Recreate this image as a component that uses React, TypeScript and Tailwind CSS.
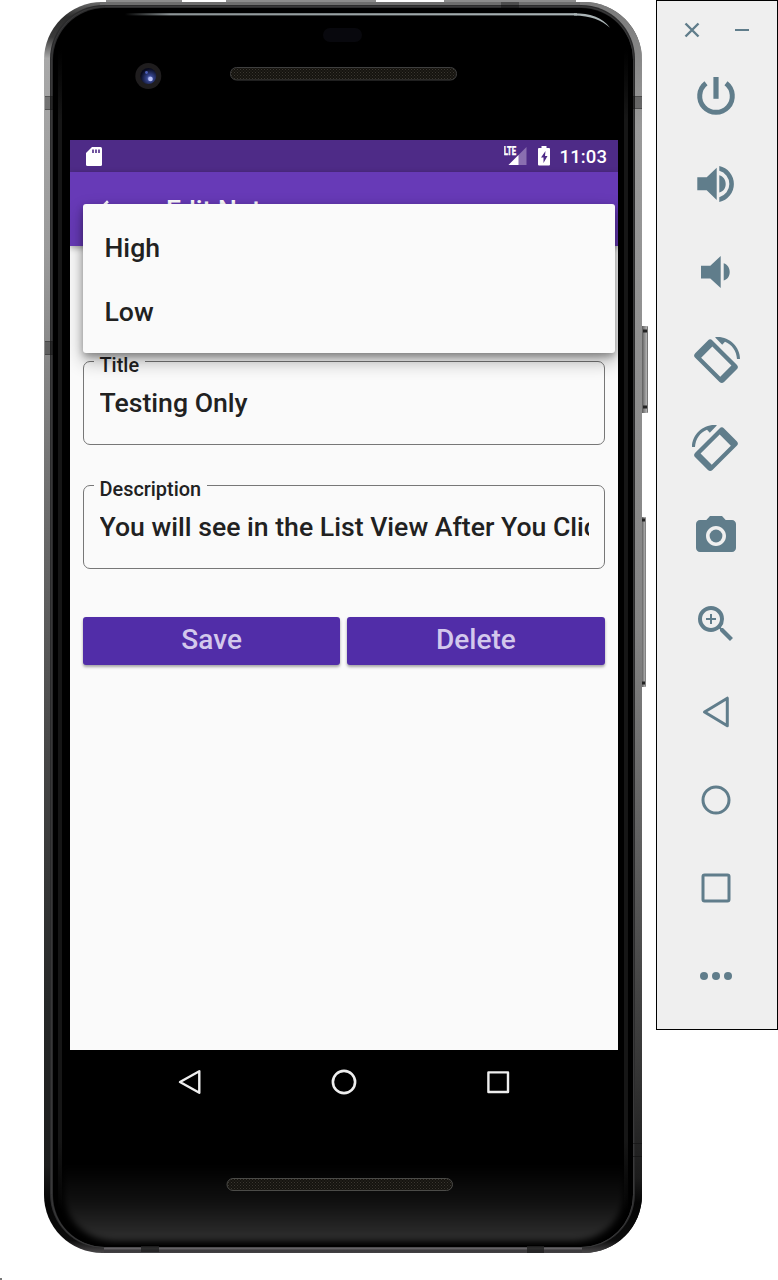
import React from "react";
import { MdArrowBack, MdOutlineZoomIn, MdPhotoCamera } from "react-icons/md";

function PhoneFrame() {
  return (
    <svg className="absolute left-0 top-0" width="656" height="1280" viewBox="0 0 656 1280" aria-hidden="true">
      <defs>
        <linearGradient id="metalLeft" x1="0" y1="0" x2="0" y2="1">
          <stop offset="0" stopColor="#6a6a6a" />
          <stop offset="0.012" stopColor="#2c2c2c" />
          <stop offset="0.028" stopColor="#3a3a3a" />
          <stop offset="0.045" stopColor="#a8a8a8" />
          <stop offset="0.2" stopColor="#9a9a9a" />
          <stop offset="0.4" stopColor="#6e6e6e" />
          <stop offset="0.6" stopColor="#474747" />
          <stop offset="0.8" stopColor="#262828" />
          <stop offset="0.93" stopColor="#1c1d1d" />
          <stop offset="0.96" stopColor="#050505" />
          <stop offset="0.99" stopColor="#0c0c0c" />
          <stop offset="1" stopColor="#4a484a" />
        </linearGradient>
        <linearGradient id="metalRight" x1="0" y1="0" x2="0" y2="1">
          <stop offset="0" stopColor="#7a7a7a" />
          <stop offset="0.1" stopColor="#9a9a9a" />
          <stop offset="0.5" stopColor="#848484" />
          <stop offset="0.7" stopColor="#5a5a5a" />
          <stop offset="0.85" stopColor="#363636" />
          <stop offset="0.94" stopColor="#1c1c1c" />
          <stop offset="0.96" stopColor="#050505" />
          <stop offset="0.99" stopColor="#0c0c0c" />
          <stop offset="1" stopColor="#4a484a" />
        </linearGradient>
        <linearGradient id="rightHalf" x1="0" y1="0" x2="1" y2="0">
          <stop offset="0.3" stopColor="#fff" stopOpacity="0" />
          <stop offset="0.7" stopColor="#fff" />
        </linearGradient>
        <mask id="rightMask">
          <rect x="44" y="0" width="612" height="1280" fill="url(#rightHalf)" />
        </mask>
        <linearGradient id="chin" x1="0" y1="0" x2="0" y2="1">
          <stop offset="0" stopColor="#000" />
          <stop offset="0.5" stopColor="#111" />
          <stop offset="1" stopColor="#303030" />
        </linearGradient>
        <linearGradient id="shine" x1="0" y1="0" x2="1" y2="0">
          <stop offset="0" stopColor="#8c9496" stopOpacity="0" />
          <stop offset="0.1" stopColor="#8c9496" />
          <stop offset="1" stopColor="#aab4b6" />
        </linearGradient>
        <linearGradient id="edge" x1="0" y1="0" x2="0" y2="1">
          <stop offset="0" stopColor="#161616" stopOpacity="0" />
          <stop offset="0.06" stopColor="#161616" />
          <stop offset="0.94" stopColor="#161616" />
          <stop offset="1" stopColor="#161616" stopOpacity="0" />
        </linearGradient>
        <linearGradient id="key" x1="0" y1="0" x2="1" y2="0">
          <stop offset="0" stopColor="#4a4a4a" />
          <stop offset="0.5" stopColor="#8a8a8a" />
          <stop offset="0.8" stopColor="#b0b0b0" />
          <stop offset="1" stopColor="#555" />
        </linearGradient>
        <pattern id="mesh" width="3" height="3" patternUnits="userSpaceOnUse">
          <rect width="3" height="3" fill="#15130f" />
          <rect width="1" height="1" fill="#3a3730" />
          <rect x="1.5" y="1.5" width="1" height="1" fill="#33312a" />
        </pattern>
        <radialGradient id="lens" cx="0.6" cy="0.65" r="0.6">
          <stop offset="0" stopColor="#a9b4f5" />
          <stop offset="0.3" stopColor="#36458f" />
          <stop offset="1" stopColor="#080a1c" />
        </radialGradient>
        <filter id="soft" x="-0.1" y="-0.2" width="1.2" height="1.4" colorInterpolationFilters="sRGB">
          <feGaussianBlur stdDeviation="3" />
        </filter>
        <clipPath id="glass">
          <rect x="54" y="9" width="579" height="1236" rx="52" />
        </clipPath>
      </defs>

      <path d="M106 1h76M226 1h150M444 1h132" stroke="#8c8c8c" strokeWidth="2" />
      <rect x="641" y="326" width="7" height="87" rx="1" fill="url(#key)" />
      <path d="M643 331h4M643 407h4" stroke="#222" strokeWidth="3" />
      <rect x="641" y="517" width="5" height="170" rx="1" fill="url(#key)" />
      <path d="M642 520h3M642 683h3" stroke="#222" strokeWidth="3" />

      <rect x="44" y="2" width="598" height="1251" rx="58" fill="url(#metalLeft)" />
      <rect x="44" y="2" width="598" height="1251" rx="58" fill="url(#metalRight)" mask="url(#rightMask)" />
      <path d="M100 3.500H580" stroke="#6e6e6e" strokeWidth="3" />
      <rect x="50" y="5" width="585" height="1243" rx="54" fill="#2b2b2c" />
      <rect x="53" y="8" width="580" height="1239" rx="52" fill="#000" />
      <g clipPath="url(#glass)">
        <path d="M64 1165h560v26c0 30-22 50-52 50H116c-30 0-52-20-52-50z" fill="url(#chin)" filter="url(#soft)" />
      </g>
      <rect x="58" y="50" width="4" height="1160" fill="url(#edge)" />
      <rect x="624" y="50" width="4" height="1160" fill="url(#edge)" />
      <rect x="51.500" y="6.500" width="582" height="1241" rx="53" fill="none" stroke="#39393a" strokeWidth="1" />

      <rect x="125" y="13.200" width="452" height="2.200" fill="url(#shine)" />
      <path d="M574 13.200c16 0 28 4 36 14.500c-9-8-19-12-36-12.300z" fill="#aab4b6" />

      <path d="M45 96.500h8M45 109.500h8M45 341.500h8M45 354.500h8M633 96.500h9M633 108.500h9M633 1143.500h9M633 1156.500h9" stroke="#111" strokeOpacity="0.55" />
      <path d="M45 97h8v12h-8zM45 342h8v12h-8zM633 97h9v11h-9zM501 2h18v6h-18z" fill="#000" fillOpacity="0.3" />
      <path d="M104 1248.500H582" stroke="#656366" strokeWidth="2" />
      <path d="M104 1251.500H582" stroke="#3d3b3e" strokeWidth="2" />
      <path d="M141 1246h18v6h-18zM527 1246h17v7h-17z" fill="#222" fillOpacity="0.85" />

      <rect x="323" y="28" width="39" height="14" rx="7" fill="#08080d" />
      <circle cx="148.300" cy="76" r="13" fill="#1f1d1e" />
      <circle cx="148.300" cy="76" r="8" fill="url(#lens)" />
      <circle cx="150.500" cy="79" r="2.300" fill="#b6bff8" />
      <circle cx="146.500" cy="72.500" r="1.400" fill="#4d5fb8" />
      <rect x="230.500" y="67.500" width="226" height="12.500" rx="6" fill="url(#mesh)" stroke="#3f3f3f" />
      <rect x="227" y="1178.500" width="225.500" height="12" rx="6" fill="url(#mesh)" stroke="#4b4b48" />
    </svg>
  );
}

function StatusBar() {
  return (
    <div className="flex h-8 items-center bg-[#4e2b87] pl-4 pr-[11px] text-white">
      <svg width="16" height="19" viewBox="0 0 16 19">
        <path d="M6 0h8.500Q16 0 16 1.500v16Q16 19 14.500 19h-13Q0 19 0 17.500V6z" fill="#fff" />
        <path d="M6.200 2.500h1.600V6H6.200zM9.200 2.500h1.600V6H9.200zM12.200 2.500h1.600V6h-1.600z" fill="#4e2b87" />
      </svg>
      <svg className="ml-auto" width="24" height="20" viewBox="0 0 24 20">
        <path d="M22.500 1v18H4.500z" fill="#8a6fb0" />
        <path d="M14.500 9v10H4.500z" fill="#fff" />
        <path d="M0 0h12.500v9.700H0z" fill="#4e2b87" />
        <text x="-0.300" y="9.300" textLength="12.500" lengthAdjust="spacingAndGlyphs" className="fill-white stroke-white stroke-[0.4px] font-['Roboto'] text-[12px] font-bold">
          LTE
        </text>
      </svg>
      <svg className="ml-2.5" width="12" height="20" viewBox="0 0 12 20">
        <path d="M3.500 0h5v2H11q1 0 1 1v15.500q0 1-1 1H1q-1 0-1-1V3q0-1 1-1h2.500z" fill="#fff" />
        <path d="M7.500 5L3 11.500h2.500v5.500L9.500 10H7z" fill="#4e2b87" />
      </svg>
      <span className="ml-[9px] w-[48px] whitespace-nowrap pt-0.5 text-right text-[18.5px] font-medium leading-[30px] tracking-[0.1px]">11:03</span>
    </div>
  );
}

function Field({ label, value, className }: { label: string; value: string; className: string }) {
  return (
    <fieldset className={"h-[98px] min-w-0 rounded-[7px] border border-[#777] pl-2.5 pr-[14.500px] " + className}>
      <legend className="pl-[5.5px] pr-1.5 pt-[9px] text-[19.9px] font-medium leading-5 text-[#212121]">{label}</legend>
      <div className="ml-[5.5px] mt-[11px] overflow-hidden whitespace-nowrap text-[26.640px] font-medium leading-8">{value}</div>
    </fieldset>
  );
}

function Action({ children }: { children: React.ReactNode }) {
  return (
    <button className="h-12 flex-1 rounded-[3px] bg-[#512da8] pb-0.5 text-[28px] font-medium leading-none text-[#d3c8ec] shadow-[0_2px_3px_rgba(0,0,0,0.35)]">
      {children}
    </button>
  );
}

function Screen() {
  return (
    <div className="relative flex h-[910px] flex-col overflow-hidden bg-[#fafafa] text-[#212121]">
      <StatusBar />
      <header className="z-10 flex h-[74px] items-center bg-[#673ab7] pl-[21px] text-white shadow-[0_2px_6px_rgba(0,0,0,0.35)]">
        <MdArrowBack className="mt-[3px] size-8" />
        <h1 className="ml-[43px] pt-px text-[26.600px] font-medium">Edit Note</h1>
      </header>
      <main className="flex flex-col pl-[13px] pr-[13.500px] pt-[101px]">
        <Field label="Title" value="Testing Only" className="" />
        <Field label="Description" value="You will see in the List View After You Click" className="mt-[26px]" />
        <div className="mt-12 flex gap-[7px]">
          <Action>Save</Action>
          <Action>Delete</Action>
        </div>
      </main>
      <ul className="absolute left-[13px] top-16 z-20 flex h-[149px] w-[532px] flex-col rounded-[3px] bg-[#fafafa] pl-[21.500px] pt-3 text-[26.600px] font-medium shadow-[0_8px_18px_rgba(0,0,0,0.32),0_3px_7px_rgba(0,0,0,0.3)]">
        <li className="flex h-16 shrink-0 items-center">High</li>
        <li className="flex h-16 shrink-0 items-center">Low</li>
      </ul>
    </div>
  );
}

function NavButtons() {
  return (
    <nav className="flex h-16 items-center justify-center gap-[114px]">
      <svg width="40" height="40" viewBox="-20 -20 40 40" fill="none" stroke="#eee" strokeWidth="2.400" strokeLinejoin="round">
        <path d="M9.300-10.800V10.800L-10 0z" />
      </svg>
      <svg width="40" height="40" viewBox="-20 -20 40 40" fill="none" stroke="#eee" strokeWidth="2.600">
        <circle r="11.100" />
      </svg>
      <svg width="40" height="40" viewBox="-20 -20 40 40" fill="none" stroke="#eee" strokeWidth="2.400" strokeLinejoin="round">
        <rect x="-9.600" y="-9.600" width="19.600" height="19.600" />
      </svg>
    </nav>
  );
}

function Glyph({ children }: { children: React.ReactNode }) {
  return (
    <svg width="60" height="60" viewBox="-30 -30 60 60" fill="currentColor">
      {children}
    </svg>
  );
}

function RotateShape() {
  return (
    <>
      <path
        transform="translate(0 1.200) rotate(45)"
        fillRule="evenodd"
        d="M-17.200-12.200H17.200q3.200 0 3.200 3.200V9q0 3.200-3.200 3.200H-17.200q-3.200 0-3.200-3.200V-9q0-3.200 3.200-3.200zM-13-7.800V8H14V-7.800z"
      />
      <path d="M-1-22.800C12-24.500 24-14 24-1h-3C20.500-9 16-15.500 9-18.300L6.200-15.200z" />
    </>
  );
}

function Toolbar() {
  return (
    <aside className="flex h-[1030px] w-[122px] flex-col items-center border border-black bg-[#efefef] text-[#607d8b]">
      <div className="flex h-[51px] items-center gap-[34px] pt-[7px]">
        <svg width="16" height="16" viewBox="-8 -8 16 16" stroke="currentColor" strokeWidth="2.400">
          <path d="M-6.500-6.500L6.500 6.500M6.500-6.500L-6.500 6.500" />
        </svg>
        <svg width="16" height="16" viewBox="-8 -8 16 16" stroke="currentColor" strokeWidth="2">
          <path d="M-7 0H7" />
        </svg>
      </div>
      <div className="flex flex-col items-center pr-0.5 [&>*]:my-[14px]">
        <Glyph>
          <path d="M-10-12.800A16.300 16.300 0 1 0 10-12.800" fill="none" stroke="currentColor" strokeWidth="5" />
          <path d="M-2.600-19H2.600V2.800H-2.600z" />
        </Glyph>
        <Glyph>
          <path d="M-18.700-6.700h9.400L.7-16.300V16L-9.300 6.300h-9.400z" />
          <path d="M3.300-8.700C7.500-7.500 9.700-4 9.700 0S7.500 7.500 3.300 8.500zM3.300-18A18.400 18.400 0 0 1 3.300 18v-4.800A13.700 13.700 0 0 0 3.300-13.200z" />
        </Glyph>
        <Glyph>
          <path d="M-15-6.300h9.300L4.700-16V16L-5.700 6.500H-15zM7.700-8.700C11.500-7.500 13.700-4 13.700 0S11.500 7.500 7.700 8.500z" />
        </Glyph>
        <Glyph><RotateShape /></Glyph>
        <Glyph><g transform="scale(-1 1)"><RotateShape /></g></Glyph>
        <Glyph><MdPhotoCamera x="-24" y="-24" size={48} /></Glyph>
        <Glyph><MdOutlineZoomIn x="-24" y="-24" size={48} /></Glyph>
        <Glyph>
          <path d="M11.300-13.800V13.800L-11.500 0z" fill="none" stroke="currentColor" strokeWidth="3" strokeLinejoin="round" />
        </Glyph>
        <Glyph><circle r="13" fill="none" stroke="currentColor" strokeWidth="3" /></Glyph>
        <Glyph>
          <rect x="-13" y="-13" width="26" height="26" rx="1.500" fill="none" stroke="currentColor" strokeWidth="3" />
        </Glyph>
        <Glyph>
          <circle cx="-12" r="4" />
          <circle r="4" />
          <circle cx="12" r="4" />
        </Glyph>
      </div>
    </aside>
  );
}

export default function App() {
  return (
    <div className="relative flex h-[1280px] w-[778px] items-start overflow-hidden bg-white font-['Roboto','Liberation_Sans',sans-serif]">
      <PhoneFrame />
      <div className="relative ml-[70px] mr-[38px] w-[548px] shrink-0 pt-[140px]">
        <Screen />
        <NavButtons />
      </div>
      <Toolbar />
      <div className="absolute bottom-0 left-0 h-0.5 w-0.5 bg-[#777]" />
    </div>
  );
}
